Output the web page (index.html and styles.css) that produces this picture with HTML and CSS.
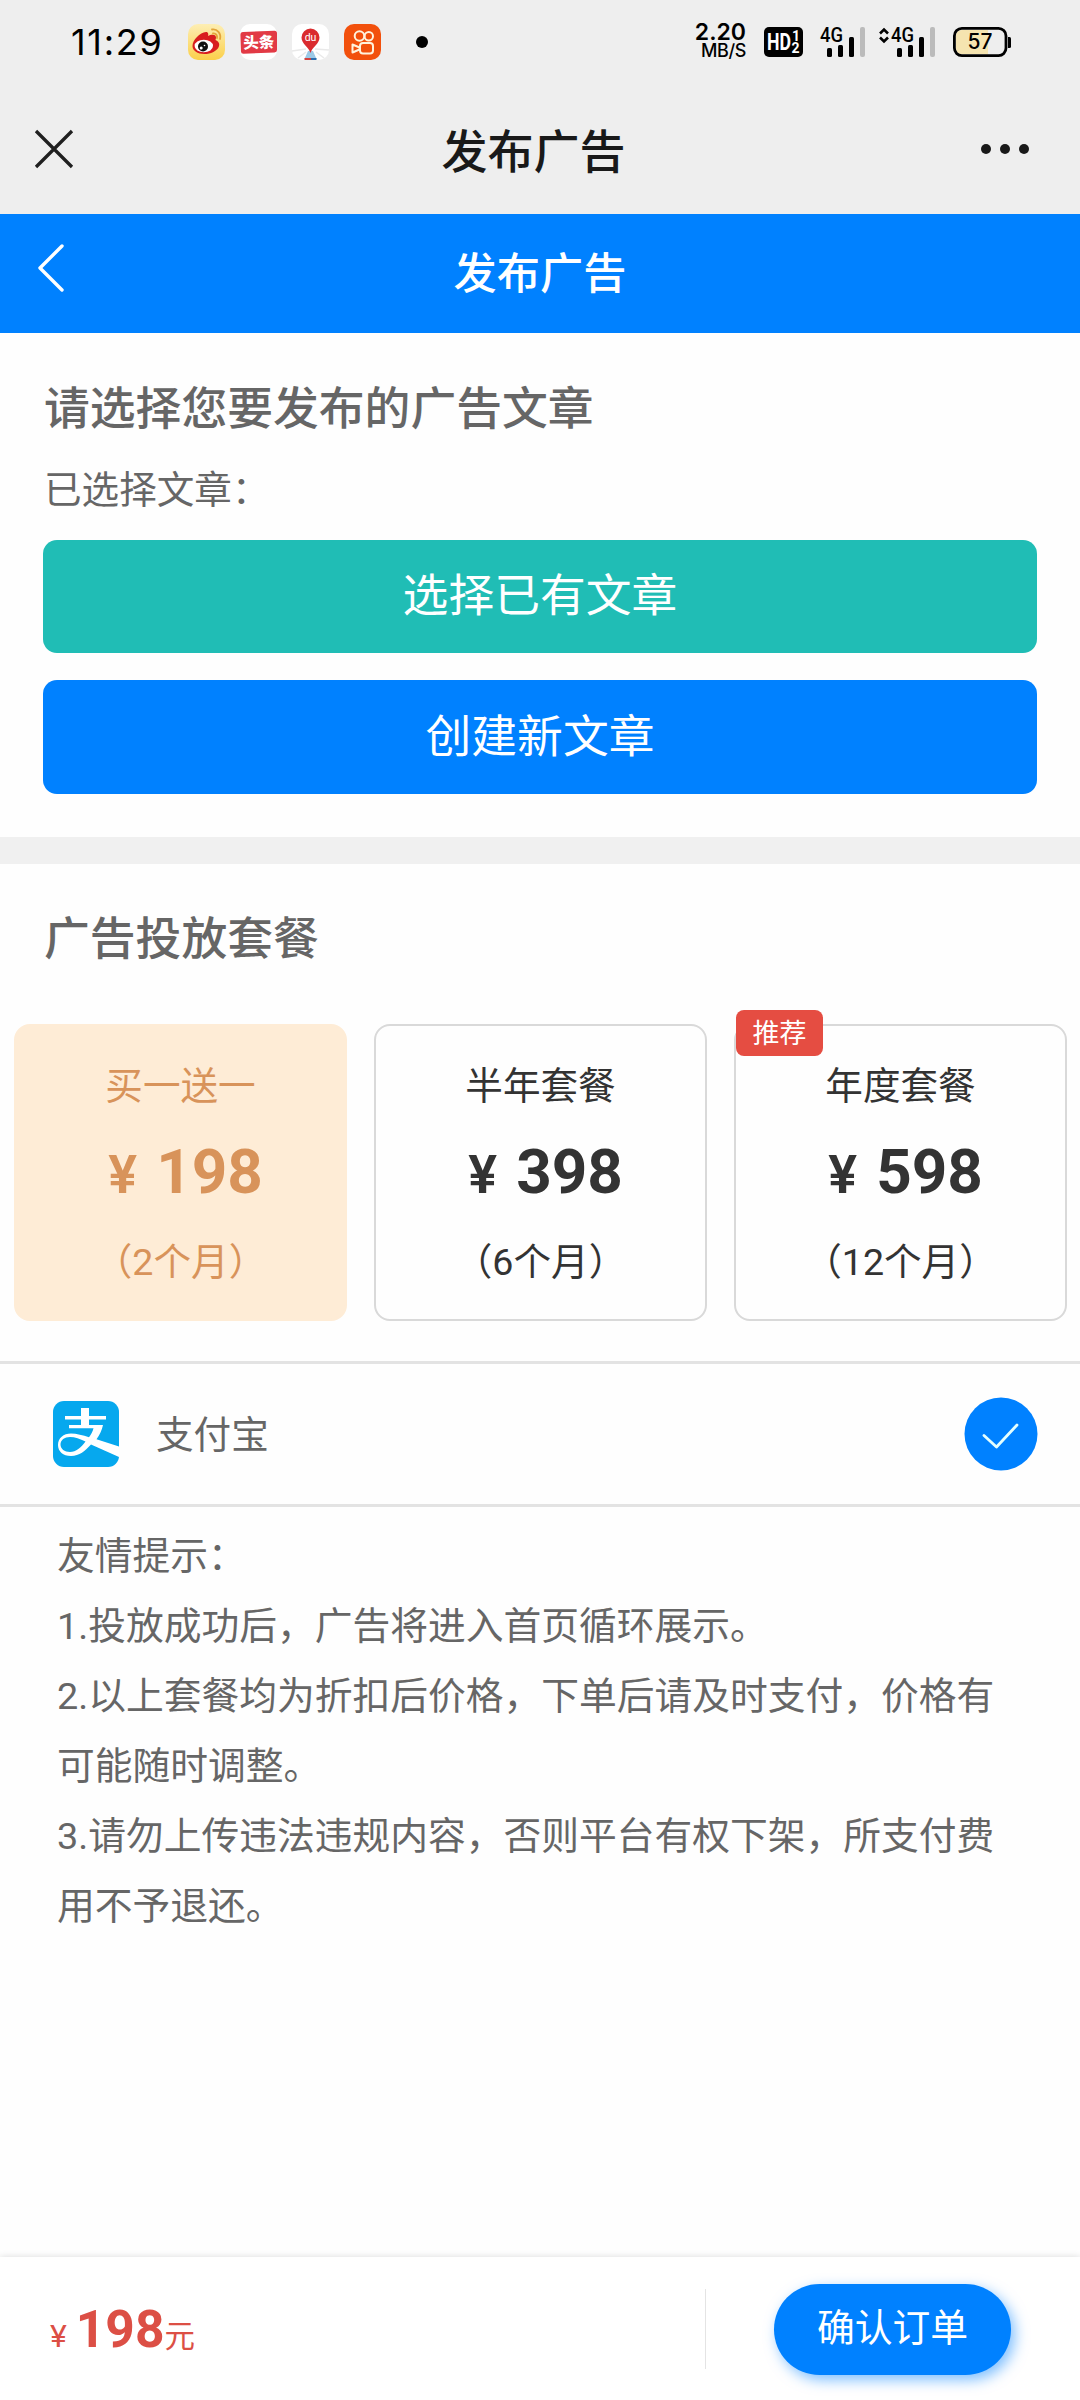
FILE: index.html
```html
<!DOCTYPE html>
<html lang="zh-CN">
<head>
<meta charset="utf-8">
<title>发布广告</title>
<link rel="stylesheet" href="styles.css">
</head>
<body>
<div class="screen">
  <header class="status">
    <div class="status-left">
      <span class="clock">11:29</span>
      <div class="apps">
        <svg width="37" height="36" viewBox="0 0 37 36">
          <defs><linearGradient id="wb" x1="0" y1="0" x2="0" y2="1"><stop offset="0" stop-color="#fdeeb4"/><stop offset="1" stop-color="#fbd04a"/></linearGradient></defs>
          <rect width="37" height="36" rx="10" fill="url(#wb)"/>
          <path d="M4.500 22C4.500 16 12 8.500 18 8c2.500 0 2.500 2.500 2 4 3-1.500 8-2 8 1.500 0 1-.5 2-.5 2.500 8 3 2.500 14-11 14C9.500 30 4.500 26.500 4.500 22z" fill="#d81e1e"/>
          <ellipse cx="15.800" cy="22" rx="9.200" ry="6.200" fill="#fff"/>
          <circle cx="15" cy="22.500" r="5" fill="#111"/><circle cx="13.200" cy="24" r="1.500" fill="#fff"/><circle cx="16.500" cy="21.500" r=".8" fill="#fff"/>
          <path d="M24 5.500c5-1 9.500 4 8 9.500M25 9.500c3-.5 4.500 2 4 4.500" fill="none" stroke="#e3a43a" stroke-width="1.800" stroke-linecap="round"/>
        </svg>
        <svg width="37" height="36" viewBox="0 0 37 36">
          <rect width="37" height="36" rx="10" fill="#fff"/>
          <path d="M3 8 34.500 6.800q2.500 0 2.500 2.500V26q0 2.300-2.500 2.400L3.500 29.700Q1 29.700.9 27.200L.4 11Q.4 8.200 3 8z" fill="#e23a45"/>
          <text class="toutiao" x="18.700" y="24" text-anchor="middle" transform="rotate(-2 18 18)">头条</text>
        </svg>
        <svg width="37" height="36" viewBox="0 0 37 36">
          <rect width="37" height="36" rx="10" fill="#fff"/>
          <path d="M0 27 14 25M37 26 23 25M6 34l8-6M32 34l-8-6" stroke="#e9e9e9" stroke-width="1.500"/>
          <path d="M16 27h5l3.500 8h-12z" fill="#9cc9e6"/><path d="M12.500 34h6.500v2h-6.500z" fill="#d3423f"/><path d="M19 34h5.500v2H19z" fill="#2c6fae"/>
          <path d="M18.500 29C17 23 9.500 20 9.500 13.500a9 9 0 0 1 18 0C27.500 20 20 23 18.500 29z" fill="#da2b2e"/>
          <text class="du" x="18.500" y="16.500" text-anchor="middle">du</text>
        </svg>
        <svg width="37" height="36" viewBox="0 0 37 36">
          <rect width="37" height="36" rx="10" fill="#f2500c"/>
          <g fill="none" stroke="#fff3dd" stroke-width="2"><circle cx="15.500" cy="12" r="4.800"/><circle cx="24.800" cy="12.300" r="4.200"/><rect x="16" y="19" width="13" height="10.500" rx="3"/><path d="M15.500 23.500 8.500 20.500v8l7-3z" stroke-linejoin="round"/></g>
        </svg>
      </div>
      <i class="dot"></i>
    </div>
    <div class="status-right">
      <div class="speed"><span class="rate">2.20</span><span class="unit">MB/S</span></div>
      <svg class="hd" width="39" height="30" viewBox="0 0 39 30">
        <rect width="39" height="30" rx="5"/>
        <text class="hd-text" x="3" y="23" textLength="24" lengthAdjust="spacingAndGlyphs">HD</text>
        <text class="hd-num" x="28" y="14">1</text><text class="hd-num" x="27.500" y="25.500">2</text>
      </svg>
      <svg class="signal" width="45" height="30" viewBox="0 0 45 30">
        <text class="net" x="-1" y="15" textLength="23" lengthAdjust="spacingAndGlyphs">4G</text>
        <rect x="6" y="21" width="5" height="9" rx="1.500"/><rect x="17" y="18" width="5" height="12" rx="1.500"/><rect x="28" y="10" width="5" height="20" rx="1.500"/><rect x="39" y="0" width="5" height="30" rx="2" fill="#bbb"/>
      </svg>
      <svg class="signal2" width="57" height="30" viewBox="0 0 57 30">
        <path d="M1 6.500l4-4 4 4M1 10.500l4 4 4-4" fill="none" stroke="#000" stroke-width="2.600"/>
        <text class="net" x="12" y="15" textLength="23" lengthAdjust="spacingAndGlyphs">4G</text>
        <rect x="18" y="21" width="5" height="9" rx="1.500"/><rect x="29" y="18" width="5" height="12" rx="1.500"/><rect x="40" y="10" width="5" height="20" rx="1.500"/><rect x="51" y="0" width="5" height="30" rx="2" fill="#bbb"/>
      </svg>
      <svg width="59" height="30" viewBox="0 0 59 30">
        <path d="M9 3h26v24H9q-6 0-6-6V9q0-6 6-6z" fill="#f5e4b0"/>
        <rect x="1.400" y="1.400" width="51.600" height="27.200" rx="7.500" fill="none" stroke="#000" stroke-width="2.800"/>
        <path d="M55 10h1.500q1.500 0 1.500 1.500v8q0 1.500-1.500 1.500H55z"/>
        <text class="battery" x="27" y="22" text-anchor="middle">57</text>
      </svg>
    </div>
  </header>

  <div class="webview-bar">
    <svg width="38" height="38" viewBox="0 0 38 38"><path d="M1 1 37 37M37 1 1 37" stroke="#1f1f1f" stroke-width="3.300"/></svg>
    <h1>发布广告</h1>
    <svg width="48" height="10" viewBox="0 0 48 10" fill="#191919"><circle cx="5" cy="5" r="5"/><circle cx="24" cy="5" r="5"/><circle cx="43" cy="5" r="5"/></svg>
  </div>

  <nav class="nav">
    <svg width="28" height="48" viewBox="0 0 28 48"><path d="M25 2 3 24l22 22" fill="none" stroke="#fff" stroke-width="3.400" stroke-linecap="round" stroke-linejoin="round"/></svg>
    <h2>发布广告</h2>
    <span class="nav-space"></span>
  </nav>

  <section class="article">
    <h3>请选择您要发布的广告文章</h3>
    <p class="selected">已选择文章：</p>
    <div class="btn teal">选择已有文章</div>
    <div class="btn blue">创建新文章</div>
  </section>

  <section class="plans">
    <h3>广告投放套餐</h3>
    <div class="cards">
      <div class="card active"><span class="name">买一送一</span><div class="price"><span class="yen">¥</span><b>198</b></div><span class="term">（2个月）</span></div>
      <div class="card"><span class="name">半年套餐</span><div class="price"><span class="yen">¥</span><b>398</b></div><span class="term">（6个月）</span></div>
      <div class="card"><span class="tag">推荐</span><span class="name">年度套餐</span><div class="price"><span class="yen">¥</span><b>598</b></div><span class="term">（12个月）</span></div>
    </div>
  </section>

  <div class="pay">
    <svg width="66" height="66" viewBox="0 0 66 66">
      <rect width="66" height="66" rx="11" fill="#06a8ee"/>
      <g fill="#fff"><path d="M28 7h8v8h17v3.500H36V24h14c-1 5-3.500 10-6.500 14.300L66 45.500V56L38 43.500C32 50 26.500 55 18 55 10 55 5 50.500 5 44c0-7 5.500-11.500 13-11.500 5.500 0 12 1.800 18 3.800 2.300-3 3.800-6 4.500-9H16V24h12v-5.500H12V15h16zM32.500 40.500C27 38 22 36 17 36c-5.500 0-9.500 3-9.500 7.500s4 7.500 9.500 7.500c6 0 11-4.500 15.500-10.500z" fill-rule="evenodd"/></g>
    </svg>
    <span class="pay-name">支付宝</span>
    <svg width="74" height="74" viewBox="0 0 74 74"><circle cx="37" cy="37" r="36.500" fill="#0081ff"/><path d="M20 38.500 32.500 50 53 28" fill="none" stroke="#e4ffff" stroke-width="2.800" stroke-linecap="round" stroke-linejoin="round"/></svg>
  </div>

  <section class="tips">
    <p>友情提示：</p>
    <p>1.投放成功后，广告将进入首页循环展示。</p>
    <p>2.以上套餐均为折扣后价格，下单后请及时支付，价格有<br>可能随时调整。</p>
    <p>3.请勿上传违法违规内容，否则平台有权下架，所支付费<br>用不予退还。</p>
  </section>

  <footer class="footer">
    <div class="total"><span class="cur">¥</span><b>198</b><span class="yuan">元</span></div>
    <div class="action"><div class="confirm">确认订单</div></div>
  </footer>
</div>
</body>
</html>
```
FILE: styles.css
```css
* { box-sizing: border-box; margin: 0; padding: 0; }
body { background: #fff; font-family: Roboto, "Noto Sans CJK SC", sans-serif; color: #666; }
svg { display: block; flex: none; overflow: visible; }
.screen { width: 1080px; height: 2400px; display: flex; flex-direction: column; overflow: hidden; background: #fefefe; }

.status { height: 84px; background: #eee; display: flex; justify-content: space-between; align-items: center; padding: 0 68px 0 71px; color: #000; }
.status-left, .status-right, .apps { display: flex; align-items: center; }
.clock { width: 117px; font: 36px/36px Inter, sans-serif; letter-spacing: 1.700px; }
.apps { gap: 15px; }
.dot { width: 12px; height: 12px; border-radius: 50%; background: #000; margin-left: 35px; }
.speed { display: flex; flex-direction: column; align-items: flex-end; font-family: Inter, sans-serif; width: 52px; padding-right: 1px; }
.rate { font-size: 23px; line-height: 18px; font-weight: 600; }
.unit { font-size: 18px; line-height: 20px; font-weight: 500; letter-spacing: -.4px; }
.hd { margin-left: 17px; }
.hd-text { font: 700 23px Roboto, sans-serif; fill: #fff; }
.hd-num { font: 700 14px Roboto, sans-serif; fill: #fff; }
.signal { margin-left: 18px; }
.signal2 { margin: 0 17px 0 13px; }
.net { font: 500 20px Roboto, sans-serif; }
.battery { font: 500 21px Inter, sans-serif; }
.toutiao { font: 900 15.500px "Noto Sans CJK SC", sans-serif; fill: #fff; }
.du { font: 10.500px Roboto, sans-serif; fill: #fff; }

.webview-bar { height: 130px; background: #eee; display: flex; align-items: center; justify-content: space-between; padding: 0 51px 0 35px; }
.webview-bar h1 { font-size: 46px; line-height: 60px; font-weight: 500; color: #191919; padding: 5px 0 0 13px; }

.nav { height: 119px; background: #0081ff; color: #fff; display: flex; align-items: center; justify-content: space-between; padding: 0 37px; }
.nav svg { margin-bottom: 11px; }
.nav h2 { font-size: 43.200px; line-height: 60px; font-weight: 500; padding-top: 2px; }
.nav-space { width: 28px; }

h3 { font-size: 45.800px; line-height: 60px; font-weight: 500; }
.article { height: 504px; padding: 47px 43px 0; }
.selected { font-size: 37.600px; line-height: 50px; margin: 25px 0 25px; padding-left: 1px; }
.article h3 { padding-left: 1px; }
.btn { height: 113px; line-height: 114px; border-radius: 14px; text-align: center; font-size: 45.800px; color: #fff; }
.teal { background: #20bdb5; margin-bottom: 27px; }
.blue { background: #0081ff; height: 114px; line-height: 115px; }

.plans { border-top: 27px solid #f0f0f0; height: 524px; padding: 46px 13px 0 14px; }
.plans h3 { padding-left: 30px; }
.cards { display: grid; grid-template-columns: repeat(3, 1fr); gap: 27px; margin-top: 54px; }
.card { position: relative; height: 297px; border: 2px solid #d9d9d9; border-radius: 16px; display: flex; flex-direction: column; align-items: center; padding-top: 35px; color: #333; }
.active { background: #feecd6; border-color: #feecd6; color: #d8935a; }
.name, .term { font-size: 37.600px; line-height: 50px; }
.price { display: flex; align-items: baseline; height: 70px; line-height: 70px; margin: 26px 0 30px; gap: 17px; padding-left: 8px; }
.price b { font-size: 62px; }
.yen { font: 600 54px/70px Roboto, sans-serif; width: 33px; text-align: center; }
.tag { position: absolute; left: 0; top: -16px; width: 87px; height: 46px; line-height: 49px; text-align: center; background: #e54d42; color: #fff; border-radius: 8px; font-size: 27px; }

.pay { height: 146px; border-top: 3px solid #e3e3e3; border-bottom: 3px solid #e3e3e3; display: flex; align-items: center; padding: 0 42px 0 53px; }
.pay-name { flex: 1; margin-left: 37px; padding-top: 2px; font-size: 37.600px; line-height: 50px; }

.tips { flex: 1; padding: 14px 57px; font-size: 37.750px; line-height: 70px; white-space: nowrap; }

.footer { height: 143px; background: #fff; box-shadow: 0 0 7px rgba(0, 0, 0, .14); display: flex; justify-content: space-between; align-items: center; }
.total { display: flex; align-items: baseline; padding: 9px 0 0 50px; color: #dc4f45; line-height: 60px; }
.cur { font-size: 32px; margin-right: 9px; }
.total b { font-size: 51.500px; }
.yuan { font-size: 30.500px; }
.action { height: 80px; width: 375px; border-left: 1px solid #e4e4e4; display: flex; align-items: center; justify-content: flex-end; padding: 2px 69px 0 0; }
.confirm { width: 237px; height: 91px; line-height: 88px; border-radius: 46px; background: #0081ff; color: #fff; text-align: center; font-size: 37.800px; box-shadow: 4px 5px 14px rgba(0, 129, 255, .5); }
```
